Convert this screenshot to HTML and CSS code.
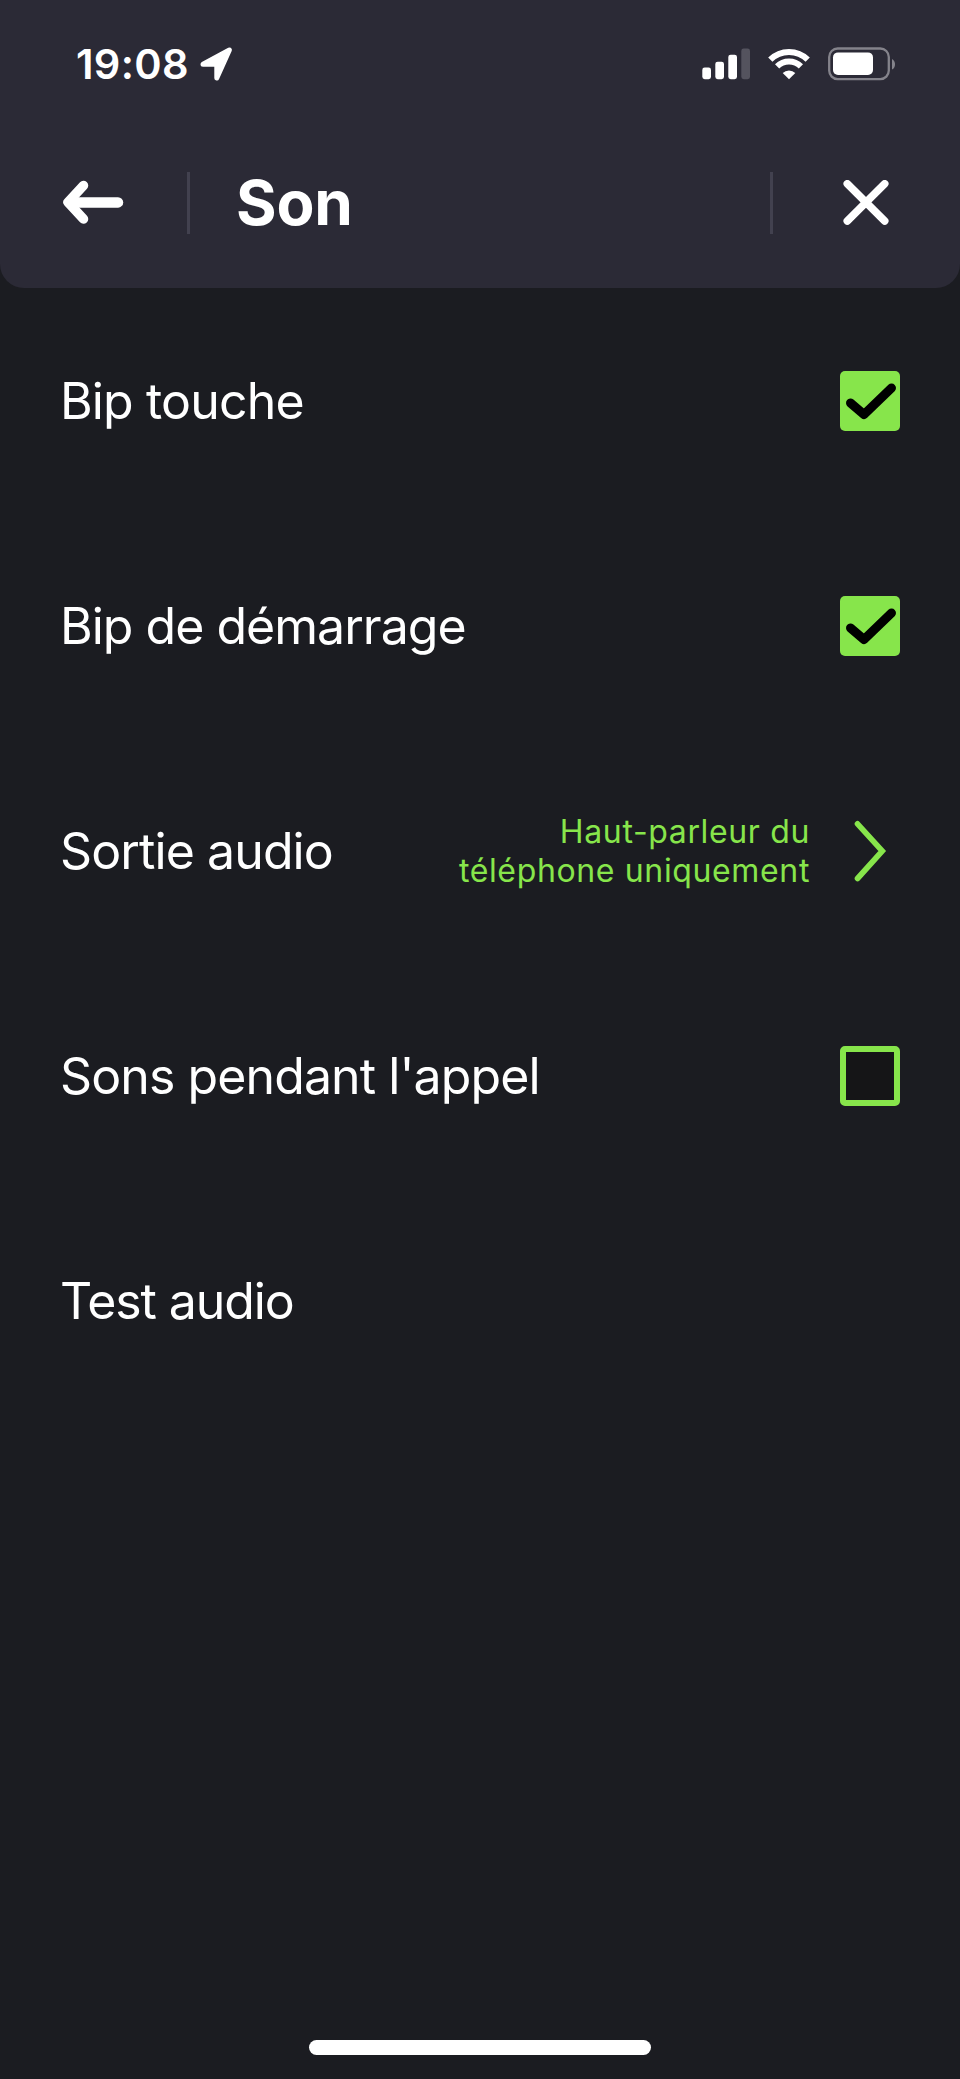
FILE: index.html
```html
<!DOCTYPE html>
<html lang="fr">
<head>
<meta charset="utf-8">
<title>Son</title>
<link rel="stylesheet" href="styles.css">
</head>
<body>
<div class="screen">
  <header class="header">
    <div class="status">
      <div class="status-left">
        <span class="time">19:08</span>
        <svg class="location" width="34" height="36" viewBox="0 0 34 36"><path d="M4 18.200 30.400 4 17.800 32V18.200Z" fill="#fff" stroke="#fff" stroke-width="5" stroke-linejoin="round"/></svg>
      </div>
      <div class="status-right">
        <svg width="50" height="32" viewBox="0 0 50 32" fill="#fff"><rect x="0.3" y="19.5" width="8.7" height="11.7" rx="2.4"/><rect x="13.3" y="13.7" width="8.7" height="17.5" rx="2.4"/><rect x="26.3" y="6.7" width="8.7" height="24.5" rx="2.4"/><rect x="39.3" y="0.5" width="8.7" height="30.7" rx="2.4" fill="#54535e"/></svg>
        <svg class="wifi" width="42" height="32" viewBox="0 0 42 32"><g fill="none" stroke="#fff" stroke-width="6"><path d="M2.3 11.6a26.5 26.5 0 0 1 37.4 0"/><path d="M9.1 18.4a17 17 0 0 1 23.8 0"/></g><path d="M21 31.3 14.7 25a9 9 0 0 1 12.6 0Z" fill="#fff"/></svg>
        <svg class="battery" width="68" height="34" viewBox="0 0 68 34"><rect x="1.2" y="1.5" width="59.6" height="30.6" rx="8.5" fill="none" stroke="#84838b" stroke-width="2.3"/><rect x="5" y="5.400" width="40" height="22.600" rx="5" fill="#fff"/><path d="M64 12c4 2 4 8.600 0 10.600Z" fill="#84838b"/></svg>
      </div>
    </div>
    <div class="bar">
      <svg class="back" width="62" height="46" viewBox="0 0 62 46" fill="none" stroke="#fff" stroke-linecap="round" stroke-linejoin="round"><path d="M21.500 5.500 6 22.300 21.500 39" stroke-width="9.500"/><path d="M9 22.400H56" stroke-width="10.500"/></svg>
      <span class="divider"></span>
      <h1 class="title">Son</h1>
      <span class="divider"></span>
      <svg class="close" width="46" height="46" viewBox="0 0 46 46" stroke="#fff" stroke-width="7.600" stroke-linecap="round"><path d="M4.300 3.800 41.700 41M41.700 3.800 4.300 41"/></svg>
    </div>
  </header>
  <main class="list">
    <div class="row"><span class="label l1">Bip touche</span><svg class="box checked" viewBox="0 0 60 60"><path d="M10.500 32 24 43.500 51.500 17" fill="none" stroke="#000" stroke-width="9" stroke-linecap="round" stroke-linejoin="round"/></svg></div>
    <div class="row"><span class="label l2">Bip de démarrage</span><svg class="box checked" viewBox="0 0 60 60"><path d="M10.500 32 24 43.500 51.500 17" fill="none" stroke="#000" stroke-width="9" stroke-linecap="round" stroke-linejoin="round"/></svg></div>
    <div class="row"><span class="label l3">Sortie audio</span><span class="value">Haut-parleur du<br>téléphone uniquement</span><svg class="chevron" width="34" height="62" viewBox="0 0 34 62" fill="none" stroke="#87e54b" stroke-width="5.600" stroke-linecap="round"><path d="M4.500 3.800 29.300 31 4.500 58.500"/></svg></div>
    <div class="row"><span class="label l4">Sons pendant l'appel</span><span class="box empty"></span></div>
    <div class="row"><span class="label l5">Test audio</span></div>
  </main>
  <div class="home"></div>
</div>
</body>
</html>
```
FILE: styles.css
```css
* { box-sizing: border-box; }
body { margin: 0; background: #1b1c21; color: #fff; font-family: Inter, "Liberation Sans", sans-serif; }
svg { display: block; flex: none; }
.screen { width: 960px; height: 2079px; display: flex; flex-direction: column; align-items: center; }
.header { width: 960px; height: 288px; background: #2b2a36; border-radius: 0 0 24px 24px; }
.status { height: 128px; padding: 0 64px 0 76px; display: flex; justify-content: space-between; align-items: center; }
.status-left, .status-right { display: flex; align-items: center; }
.time { font-size: 41.500px; font-weight: 560; line-height: 50px; letter-spacing: 0.300px; width: 123px; white-space: nowrap; }
.wifi { margin-left: 16px; }
.battery { margin-left: 18px; }
.bar { height: 149px; padding: 0 71px 0 62px; display: flex; align-items: center; }
.divider { width: 3px; height: 62px; background: #42414f; flex: none; }
.back { margin-right: 63px; }
.title { margin: 0 0 0 46px; flex: 1; font-size: 62px; font-weight: 700; line-height: 74px; letter-spacing: -0.200px; }
.close { margin-left: 70px; }
.list { width: 960px; }
.row { height: 225px; padding: 0 60px; display: flex; align-items: center; }
.label { flex: 1; font-size: 50px; line-height: 60px; white-space: nowrap; }
.l1 { letter-spacing: -0.850px; }
.l2 { letter-spacing: -0.980px; }
.l3 { letter-spacing: -0.900px; }
.l4 { letter-spacing: -0.900px; }
.l5 { letter-spacing: -1.100px; }
.box { width: 60px; height: 60px; border-radius: 5px; flex: none; }
.checked { background: #87e54b; }
.empty { background: #151517; border: 6px solid #87e54b; }
.value { font-size: 32px; line-height: 39px; color: #87e54b; text-align: right; letter-spacing: 0.640px; white-space: nowrap; }
.chevron { margin: 0 13px 0 43px; }
.home { margin-top: auto; margin-bottom: 24px; width: 342px; height: 15px; border-radius: 8px; background: #fff; }
```
